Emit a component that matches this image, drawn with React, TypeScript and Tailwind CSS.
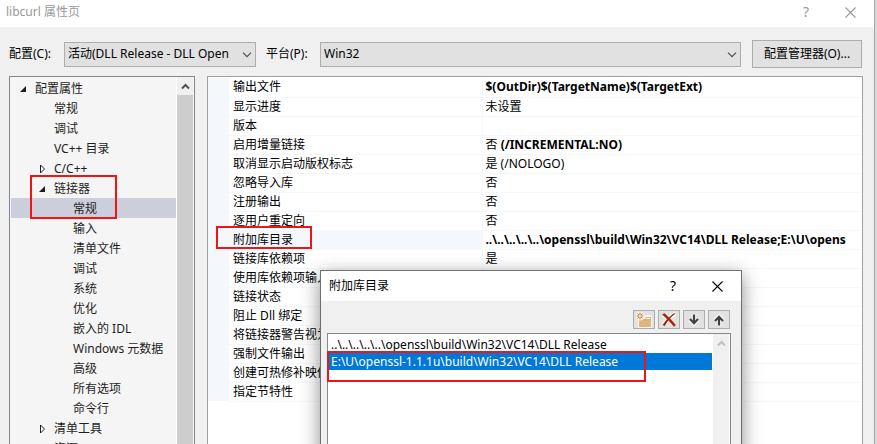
import { useState } from 'react'

type TreeItem = {
  id: string
  text: string
  level: number
  state?: 'open' | 'closed'
}

type Property = {
  name: string
  value: string
  bold?: string
}

const treeItems: TreeItem[] = [
  { id: "root", text: "配置属性", level: 0, state: "open" },
  { id: "general", text: "常规", level: 1 },
  { id: "debug", text: "调试", level: 1 },
  { id: "vcDirs", text: "VC++ 目录", level: 1 },
  { id: "cpp", text: "C/C++", level: 1, state: "closed" },
  { id: "linker", text: "链接器", level: 1, state: "open" },
  { id: "linkerGeneral", text: "常规", level: 2 },
  { id: "linkerInput", text: "输入", level: 2 },
  { id: "linkerManifest", text: "清单文件", level: 2 },
  { id: "linkerDebug", text: "调试", level: 2 },
  { id: "linkerSystem", text: "系统", level: 2 },
  { id: "linkerOptimize", text: "优化", level: 2 },
  { id: "linkerIdl", text: "嵌入的 IDL", level: 2 },
  { id: "linkerWinmd", text: "Windows 元数据", level: 2 },
  { id: "linkerAdvanced", text: "高级", level: 2 },
  { id: "linkerAll", text: "所有选项", level: 2 },
  { id: "linkerCommand", text: "命令行", level: 2 },
  { id: "manifestTool", text: "清单工具", level: 1, state: "closed" },
  { id: "resources", text: "资源", level: 1 },
];

const properties: Property[] = [
  { name: "输出文件", value: "", bold: "$(OutDir)$(TargetName)$(TargetExt)" },
  { name: "显示进度", value: "未设置" },
  { name: "版本", value: "" },
  { name: "启用增量链接", value: "否 ", bold: "(/INCREMENTAL:NO)" },
  { name: "取消显示启动版权标志", value: "是 (/NOLOGO)" },
  { name: "忽略导入库", value: "否" },
  { name: "注册输出", value: "否" },
  { name: "逐用户重定向", value: "否" },
  { name: "附加库目录", value: "", bold: "..\\..\\..\\..\\..\\openssl\\build\\Win32\\VC14\\DLL Release;E:\\U\\opens" },
  { name: "链接库依赖项", value: "是" },
  { name: "使用库依赖项输入", value: "" },
  { name: "链接状态", value: "" },
  { name: "阻止 Dll 绑定", value: "" },
  { name: "将链接器警告视为错误", value: "" },
  { name: "强制文件输出", value: "" },
  { name: "创建可热修补映像", value: "" },
  { name: "指定节特性", value: "" },
];

const directories = [
  "..\\..\\..\\..\\..\\openssl\\build\\Win32\\VC14\\DLL Release",
  "E:\\U\\openssl-1.1.1u\\build\\Win32\\VC14\\DLL Release",
];

const indents = ["pl-2", "pl-[27px]", "pl-[46px]"];

const CloseIcon = () => (
  <svg width="11" height="11" viewBox="0 0 11 11" fill="none" stroke="currentColor" strokeWidth="1.1">
    <path d="M.5.5l10 10M10.5.5l-10 10" />
  </svg>
)

const NewFolderIcon = () => (
  <svg width="16" height="16" viewBox="0 0 16 16" className="shrink-0">
    <path d="M2 6h6l1-3h7v13H2z" fill="#f6f6f6" />
    <path d="M3 7h6l1-2h5v10H3z" fill="#dcb67a" />
    <path d="M10.500 6H14v1h-4z" fill="#f6f6f6" />
    <circle cx="4" cy="4" r="4.500" fill="#f6f6f6" />
    <path d="M4 .5v7M.5 4h7M1.500 1.500l5 5M6.500 1.500l-5 5" stroke="#c27d1a" />
    <circle cx="4" cy="4" r="1" fill="#f6f6f6" />
  </svg>
)

const DeleteIcon = () => (
  <svg width="16" height="16" viewBox="0 0 16 16" fill="none" className="shrink-0">
    <path d="M2 2.500q6 4 11.500 11.500M14 2Q7 6 2.500 13.500" stroke="#f6f6f6" strokeWidth="4.500" />
    <path d="M1.500 2.500L3.500 1.500Q9 6 14.500 13L13 14.500Q8 8 1.500 2.500z" fill="#a1260d" stroke="#a1260d" strokeWidth=".6" />
    <path d="M12.500 1.500h2Q7 7 4 14L1.500 13Q6 6 12.500 1.500z" fill="#a1260d" />
  </svg>
)

const ArrowIcon = ({ up }: { up?: boolean }) => (
  <svg width="16" height="16" viewBox="0 0 16 16" fill="none" className={up ? "shrink-0 rotate-180" : "shrink-0"}>
    <path d="M8 2v10M4 7.500l4 4 4-4" stroke="#f6f6f6" strokeWidth="4.500" />
    <path d="M8 2.500v9M4 7l4 4.200L12 7" stroke="#424242" strokeWidth="2.200" />
  </svg>
)

const ScrollUp = ({ className }: { className: string }) => (
  <svg width="9" height="7" viewBox="0 0 9 7" fill="none" stroke="currentColor" strokeWidth="2" className={className}>
    <path d="M1 5.500L4.500 2 8 5.500" />
  </svg>
)

const Expander = ({ state }: { state?: string }) => (
  <svg width="8" height="10" viewBox="0 0 8 10" className="shrink-0">
    {state === "open" && <path d="M7 2v6H1z" fill="#1e1e1e" />}
    {state === "closed" && <path d="M2.500 1v8l4-4z" fill="#fff" stroke="#1e1e1e" />}
  </svg>
)

const Dropdown = ({ id, text }: { id: string, text: string }) => (
  <div className="relative">
    <select id={id} className="block w-full h-[25px] pl-[3px] pr-5 appearance-none border border-[#adadad] bg-[#e1e1e1]">
      <option>{text}</option>
    </select>
    <svg width="10" height="6" viewBox="0 0 10 6" fill="none" stroke="#505050" strokeWidth="1.200" className="absolute right-1 top-[10px] pointer-events-none">
      <path d="M1 .7l4 4 4-4" />
    </svg>
  </div>
)

const DirectoryDialog = () => {
  const [current, setCurrent] = useState(1);
  const toolButton = "w-[22px] h-[19px] flex items-center justify-center border border-[#adadad] bg-[#e1e1e1]";

  return (
    <div role="dialog" aria-label="附加库目录" className="absolute left-[320px] top-[270px] w-[422px] h-80 flex flex-col border border-[#6e6e6e] bg-[#f0f0f0] shadow-[0_5px_18px_rgba(0,0,0,0.45)]">
      <div className="h-[30px] shrink-0 pl-2 pr-[18px] flex items-center bg-white">
        <h2 className="flex-1">附加库目录</h2>
        <button aria-label="帮助" className="mr-9 text-sm">?</button>
        <button aria-label="关闭"><CloseIcon /></button>
      </div>
      <div className="pt-[9px] pr-[11px] pb-1 flex justify-end gap-[3px]">
        <button aria-label="新行" className={toolButton}><NewFolderIcon /></button>
        <button aria-label="删除" className={toolButton}><DeleteIcon /></button>
        <button aria-label="下移" className={toolButton}><ArrowIcon /></button>
        <button aria-label="上移" className={toolButton}><ArrowIcon up /></button>
      </div>
      <div className="relative flex-1 ml-1.5 mr-2.5 flex border border-[#828790] bg-white">
        <ul role="listbox" aria-label="附加库目录" className="flex-1 pt-0.5">
          {directories.map((dir, i) => (
            <li key={dir} role="option" aria-selected={i === current} onClick={() => setCurrent(i)}
              className={i === current ? "h-[17px] pl-[3px] leading-[17px] bg-[#0078d7] text-white" : "h-[17px] pl-[3px] leading-[17px]"}>
              {dir}
            </li>
          ))}
        </ul>
        <div className="w-4 ml-px mr-px pt-1.5 flex justify-center bg-[#f0f0f0]">
          <ScrollUp className="text-[#bfbfbf]" />
        </div>
        <div className="absolute -left-px top-[17px] w-[319px] h-[31px] border-2 border-[#f01414] pointer-events-none" />
      </div>
    </div>
  )
}

const App = () => {
  const [selected, setSelected] = useState("linkerGeneral");
  const [row, setRow] = useState("附加库目录");

  return (
    <div className="relative h-screen overflow-hidden flex bg-[#d9d9d9] font-['Noto_Sans','Noto_Sans_CJK_SC',sans-serif] text-xs text-black">
      <main className="flex-1 min-w-0 mr-0.5 flex flex-col border-r border-[#a6a6a6] bg-[#f0f0f0]">
        <header className="h-[27px] shrink-0 pl-1.5 pr-[18px] pb-[3px] flex items-center bg-white text-[#999]">
          <h1 className="flex-1">libcurl 属性页</h1>
          <button aria-label="帮助" className="mr-9 text-sm">?</button>
          <button aria-label="关闭"><CloseIcon /></button>
        </header>

        <div className="pt-[13px] pb-2 pl-[9px] pr-3 flex items-center">
          <label htmlFor="config" className="w-[55px] shrink-0">配置(C):</label>
          <div className="w-48 shrink-0"><Dropdown id="config" text="活动(DLL Release - DLL Open" /></div>
          <label htmlFor="platform" className="w-16 pl-2.5 shrink-0">平台(P):</label>
          <div className="flex-1"><Dropdown id="platform" text="Win32" /></div>
          <button className="ml-[11px] w-[110px] h-7 shrink-0 border border-[#adadad] bg-[#e1e1e1]">配置管理器(O)...</button>
        </div>

        <div className="flex-1 min-h-0 pl-[9px] pr-[11px] flex gap-3">
          <nav className="relative w-[186px] shrink-0 flex border border-b-0 border-[#828790] bg-[#f5f5f5]">
            <ul className="flex-1 pl-px pt-px overflow-hidden">
              {treeItems.map((item) => (
                <li key={item.id} className={item.id === selected ? "bg-[#cccedb]" : ""}>
                  <button onClick={() => setSelected(item.id)} className={`w-full h-5 pt-px flex items-center gap-2 text-left text-[#1e1e1e] ${indents[item.level]}`}>
                    <Expander state={item.state} />
                    {item.text}
                  </button>
                </li>
              ))}
            </ul>
            <div className="w-[17px] pl-px mr-px flex flex-col bg-white">
              <div className="h-[18px] flex items-center justify-center bg-[#f0f0f0]">
                <ScrollUp className="text-[#505050]" />
              </div>
              <div className="flex-1 bg-[#cdcdcd]" />
            </div>
            <div className="absolute left-5 top-[98px] w-[87px] h-[44px] border-2 border-[#f01414] pointer-events-none" />
          </nav>

          <section className="relative flex-1 min-w-0 border border-b-0 border-[#a0a0a0] bg-white">
            <table className="mt-px w-full table-fixed border-collapse">
              <colgroup>
                <col className="w-[21px]" />
                <col className="w-[253px]" />
                <col />
              </colgroup>
              <tbody>
                {properties.map((prop) => (
                  <tr key={prop.name} onClick={() => setRow(prop.name)}>
                    <td className="p-0 bg-[#f4f7fc]" />
                    <th scope="row" className={`h-[19px] p-0 pl-1 leading-[18px] text-left font-normal whitespace-nowrap border-b border-r border-[#f4f7fc] ${prop.name === row ? "bg-[#f4f7fc]" : ""}`}>
                      {prop.name}
                    </th>
                    <td className="h-[19px] p-0 pl-[3px] leading-[18px] whitespace-nowrap overflow-hidden border-b border-[#f4f7fc]">
                      {prop.value}
                      {prop.bold && <b>{prop.bold}</b>}
                    </td>
                  </tr>
                ))}
              </tbody>
            </table>
            <div className="absolute left-2 top-[149px] w-[96px] h-[23px] border-2 border-[#f01414] pointer-events-none" />
          </section>
        </div>
      </main>

      <DirectoryDialog />
    </div>
  )
}

export default App
